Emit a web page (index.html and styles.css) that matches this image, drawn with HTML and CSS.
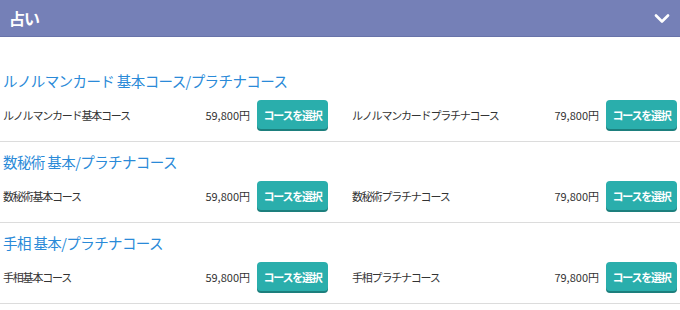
FILE: index.html
```html
<!DOCTYPE html>
<html lang="ja">
<head>
<meta charset="utf-8">
<link rel="stylesheet" href="styles.css">
</head>
<body>
<header class="bar">
  <h1 class="bar-title">占い</h1>
  <svg class="chev" width="16" height="10" viewBox="0 0 16 10"><path d="M2 1.5 L8 7.5 L14 1.5" fill="none" stroke="#fff" stroke-width="2.6" stroke-linecap="round" stroke-linejoin="round"/></svg>
</header>
<main class="list">
  <section class="group">
    <h2 class="group-title">ルノルマンカード 基本コース/プラチナコース</h2>
    <div class="courses">
      <div class="course"><span class="name">ルノルマンカード基本コース</span><span class="price">59,800円</span><button class="btn">コースを選択</button></div>
      <div class="course"><span class="name">ルノルマンカードプラチナコース</span><span class="price">79,800円</span><button class="btn">コースを選択</button></div>
    </div>
  </section>
  <section class="group">
    <h2 class="group-title">数秘術 基本/プラチナコース</h2>
    <div class="courses">
      <div class="course"><span class="name">数秘術基本コース</span><span class="price">59,800円</span><button class="btn">コースを選択</button></div>
      <div class="course"><span class="name">数秘術プラチナコース</span><span class="price">79,800円</span><button class="btn">コースを選択</button></div>
    </div>
  </section>
  <section class="group">
    <h2 class="group-title">手相 基本/プラチナコース</h2>
    <div class="courses">
      <div class="course"><span class="name">手相基本コース</span><span class="price">59,800円</span><button class="btn">コースを選択</button></div>
      <div class="course"><span class="name">手相プラチナコース</span><span class="price">79,800円</span><button class="btn">コースを選択</button></div>
    </div>
  </section>
</main>
</body>
</html>
```
FILE: styles.css
```css
* { box-sizing: border-box; }
body {
  margin: 0;
  background: #fff;
  font-family: "Noto Sans CJK JP", "Noto Sans", sans-serif;
  color: #333;
}
.bar {
  height: 37px;
  background: #7580b7;
  border-bottom: 1px solid #6873a9;
  display: flex;
  align-items: center;
  justify-content: space-between;
  padding: 0 10px 0 9px;
}
.bar-title {
  margin: 0;
  font-size: 16px;
  font-weight: 700;
  color: #fff;
  letter-spacing: -1px;
}
.chev { display: block; margin-top: 1px; }
.list { padding-top: 24px; }
.group {
  padding: 10px 3px 10px;
  border-bottom: 1px solid #dcdcdc;
}
.group-title {
  margin: 0 0 9px;
  height: 20px;
  line-height: 20px;
  font-size: 14.5px;
  font-weight: 400;
  color: #2a8ad8;
  letter-spacing: -0.6px;
}
.courses {
  display: grid;
  grid-template-columns: 1fr 1fr;
  column-gap: 24px;
}
.course {
  display: flex;
  align-items: center;
  padding-bottom: 2px;
  font-size: 11px;
  letter-spacing: -1.2px;
}
.name { flex: 1; }
.price { margin-right: 7px; letter-spacing: 0; }
.btn {
  width: 71px;
  height: 29px;
  border: 0;
  border-radius: 4px;
  background: #2aaeac;
  box-shadow: 0 2px 0 #1d7f7d;
  color: #fff;
  font-family: inherit;
  font-size: 11px;
  font-weight: 700;
  letter-spacing: -1.2px;
  padding: 0;
}
```
